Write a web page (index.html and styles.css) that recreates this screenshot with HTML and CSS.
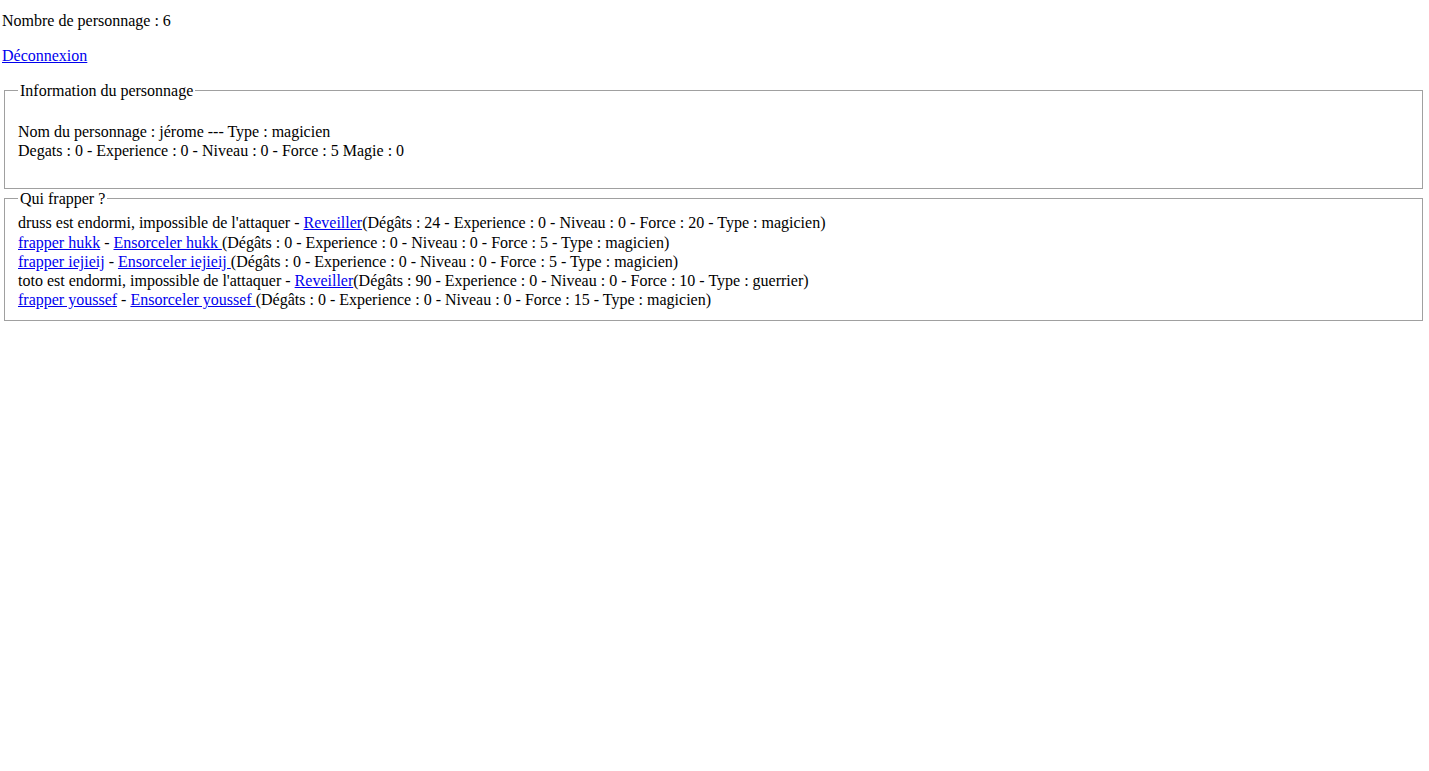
FILE: index.html
```html
<!DOCTYPE html>
<html lang="fr">
<head>
<meta charset="utf-8">
<title>Combat</title>
<link rel="stylesheet" href="styles.css">
</head>
<body>
<p class="count">Nombre de personnage : 6</p>
<p><a href="#">Déconnexion</a></p>
<fieldset class="box">
<legend>Information du personnage</legend>
<p class="info">Nom du personnage : jérome --- Type : magicien<br>Degats : 0 - Experience : 0 - Niveau : 0 - Force : 5 Magie : 0</p>
</fieldset>
<fieldset class="box">
<legend>Qui frapper ?</legend>
druss est endormi, impossible de l'attaquer - <a href="#">Reveiller</a>(Dégâts : 24 - Experience : 0 - Niveau : 0 - Force : 20 - Type : magicien)<br>
<a href="#">frapper hukk</a> - <a href="#">Ensorceler hukk </a>(Dégâts : 0 - Experience : 0 - Niveau : 0 - Force : 5 - Type : magicien)<br>
<a href="#">frapper iejieij</a> - <a href="#">Ensorceler iejieij </a>(Dégâts : 0 - Experience : 0 - Niveau : 0 - Force : 5 - Type : magicien)<br>
toto est endormi, impossible de l'attaquer - <a href="#">Reveiller</a>(Dégâts : 90 - Experience : 0 - Niveau : 0 - Force : 10 - Type : guerrier)<br>
<a href="#">frapper youssef</a> - <a href="#">Ensorceler youssef </a>(Dégâts : 0 - Experience : 0 - Niveau : 0 - Force : 15 - Type : magicien)
</fieldset>
</body>
</html>
```
FILE: styles.css
```css
html, body {
  background: #fff;
}
body {
  margin: 0 4px 0 2px;
  font-family: "Liberation Serif", "Times New Roman", serif;
  font-size: 16px;
  line-height: 1.2;
  color: #000;
}
p {
  margin: 16px 0;
}
.count {
  margin-top: 11px;
}
.info {
  margin-bottom: 17px;
}
a {
  color: #0000ee;
  text-decoration: underline;
}
.box {
  margin: 0 2px;
  padding: 5.1px 13px 11px;
  border: 1px solid #a0a0a0;
  min-width: 0;
}
.box legend {
  padding: 0 2px;
}
```
